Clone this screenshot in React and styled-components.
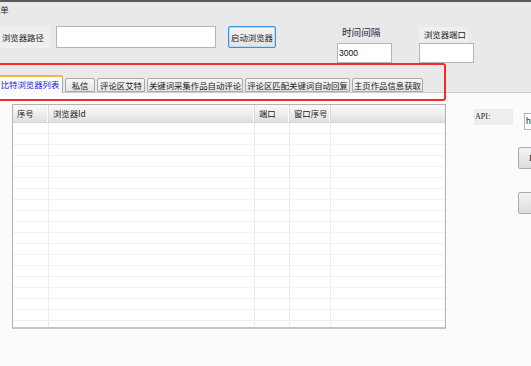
import React from "react";
import styled, { createGlobalStyle } from "styled-components";

const Global = createGlobalStyle`
  html, body { margin: 0; padding: 0; }
  body {
    width: 531px; height: 366px; overflow: hidden;
    background: #fbfbfd;
    font-family: "Noto Sans CJK SC", "Noto Sans", sans-serif;
  }
  #root { width: 531px; height: 366px; }
`;

const Window = styled.div`
  position: relative;
  width: 531px;
  height: 366px;
  overflow: hidden;
  display: flex;
  flex-direction: column;
  background: #fbfbfd;
`;

const TopArea = styled.div`
  background: #e9e9e9;
  display: flex;
  flex-direction: column;
`;

const TopLine = styled.div`
  height: 2px;
  background: #5a5a5a;
`;

const MenuBar = styled.div`
  height: 14px;
  font-size: 8.4px;
  line-height: 14px;
  color: #20263a;
  white-space: nowrap;
  span { margin-left: -8px; }
`;

const FormRow = styled.div`
  display: flex;
  align-items: flex-start;
  margin-top: 10px;
  height: 37px;
`;

const Label = styled.div`
  font-size: 8.4px;
  color: #222;
  white-space: nowrap;
  background: ${(p) => (p.$boxed ? "#efefef" : "transparent")};
  height: ${(p) => p.$h || 22}px;
  line-height: ${(p) => p.$h || 22}px;
  width: ${(p) => (p.$w ? p.$w + "px" : "auto")};
  padding-left: ${(p) => p.$pl || 0}px;
  margin-left: ${(p) => p.$ml || 0}px;
  margin-top: ${(p) => p.$mt || 0}px;
  box-sizing: border-box;
`;

const TimeLabel = styled.div`
  font-size: 9.6px;
  line-height: 11px;
  height: 11px;
  margin-top: 1px;
  padding-left: 5px;
  color: #1b2744;
  white-space: nowrap;
`;

const TextInput = styled.div`
  box-sizing: border-box;
  width: ${(p) => p.$w}px;
  height: ${(p) => p.$h}px;
  margin-left: ${(p) => p.$ml || 0}px;
  margin-top: ${(p) => p.$mt || 0}px;
  background: #fff;
  border: 1px solid #b4b4b4;
  font-family: "Liberation Sans", Arial, sans-serif;
  font-size: 8.6px;
  line-height: ${(p) => p.$h - 2}px;
  padding-left: 1px;
  color: #111;
  white-space: nowrap;
  overflow: hidden;
  flex-shrink: 0;
`;

const LaunchButton = styled.div`
  box-sizing: border-box;
  width: 48px;
  height: 22px;
  margin-left: 12px;
  border: 1px solid #3f8fe0;
  border-radius: 2px;
  box-shadow: inset 0 0 0 1px #b5dcf7;
  background: linear-gradient(#f4f4f4, #e3e3e3);
  font-size: 8.4px;
  line-height: 20px;
  text-align: center;
  color: #222;
  white-space: nowrap;
`;

const Group = styled.div`
  display: flex;
  flex-direction: column;
  margin-left: ${(p) => p.$ml}px;
`;

const TabStrip = styled.div`
  display: flex;
  align-items: flex-end;
  gap: 2px;
  height: 29px;
  border-bottom: 1px solid #cdcdcd;
  box-sizing: content-box;
`;

const Tab = styled.div`
  position: relative;
  box-sizing: border-box;
  flex-shrink: 0;
  width: ${(p) => p.$w}px;
  margin-left: ${(p) => p.$ml || 0}px;
  height: ${(p) => (p.$active ? 18 : 14)}px;
  margin-bottom: ${(p) => (p.$active ? -1 : 0)}px;
  border: 1px solid #a9a9a9;
  border-bottom: ${(p) => (p.$active ? "none" : "1px solid #a9a9a9")};
  border-top: ${(p) => (p.$active ? "2px solid #f3b23a" : "1px solid #a9a9a9")};
  border-radius: 2px 2px 0 0;
  background: ${(p) => (p.$active ? "#fbfbfd" : "linear-gradient(#f6f6f6, #e5e5e5)")};
  z-index: ${(p) => (p.$active ? 1 : 0)};
  font-size: 8.4px;
  line-height: ${(p) => (p.$active ? 15 : 12)}px;
  text-align: center;
  color: ${(p) => (p.$active ? "#1a22d8" : "#222")};
  white-space: nowrap;
`;

const TabPage = styled.div`
  flex: 1;
  display: flex;
  align-items: flex-start;
  background: #fbfbfd;
`;

const GridBox = styled.div`
  box-sizing: border-box;
  margin-top: 11px;
  margin-left: 12px;
  width: 434px;
  height: 225px;
  border: 1px solid #b2b2b2;
  border-bottom: 2px solid #c4c4c4;
  background: #fff;
  overflow: hidden;
  flex-shrink: 0;
`;

const cols = "36px 206px 35px 41px 1fr";

const HeaderRow = styled.div`
  display: grid;
  grid-template-columns: ${cols};
  height: 17px;
  background: linear-gradient(#f9f9f9, #ededed 55%, #dedede);
  border-bottom: 1px solid #d6d6d6;
`;

const HeaderCell = styled.div`
  font-size: 8.4px;
  line-height: 17px;
  padding-left: 4px;
  color: #222;
  white-space: nowrap;
  border-right: ${(p) => (p.$last ? "none" : "1px solid #dcdcdc")};
  box-shadow: ${(p) => (p.$last ? "none" : "inset -1px 0 0 #fdfdfd")};
`;

const BodyRow = styled.div`
  display: grid;
  grid-template-columns: ${cols};
  height: 11px;
  box-sizing: border-box;
  border-bottom: 1px solid #f1f1f1;
`;

const BodyCell = styled.div`
  border-right: ${(p) => (p.$last ? "none" : "1px solid #ececec")};
`;

const RightPanel = styled.div`
  display: flex;
  flex-direction: column;
  margin-left: 28px;
  margin-top: 16px;
  flex-shrink: 0;
`;

const ApiRow = styled.div`
  display: flex;
  align-items: flex-start;
`;

const ApiLabel = styled.div`
  width: 39px;
  height: 16px;
  background: #eeeeee;
  font-family: "Liberation Serif", "DejaVu Serif", serif;
  font-size: 8px;
  line-height: 16px;
  padding-left: 1px;
  box-sizing: border-box;
  color: #222;
`;

const SideButton = styled.div`
  box-sizing: border-box;
  width: 60px;
  height: 22px;
  margin-left: 44px;
  margin-top: ${(p) => p.$mt}px;
  border: 1px solid #acacac;
  border-radius: 2px;
  background: linear-gradient(#f3f3f3, #dddddd);
  font-family: "Liberation Serif", serif;
  font-size: 9px;
  line-height: 20px;
  padding-left: 10px;
  color: #111;
  white-space: nowrap;
`;

const Highlight = styled.div`
  position: absolute;
  left: -10px;
  top: 63px;
  width: 456px;
  height: 38px;
  box-sizing: border-box;
  border: 2px solid #f52a2a;
  border-radius: 3px;
  pointer-events: none;
  z-index: 5;
`;

const tabs = [
  { label: "比特浏览器列表", w: 66, active: true },
  { label: "私信", w: 30 },
  { label: "评论区艾特", w: 48 },
  { label: "关键词采集作品自动评论", w: 96 },
  { label: "评论区匹配关键词自动回复", w: 105 },
  { label: "主页作品信息获取", w: 71 },
];

const headers = ["序号", "浏览器Id", "端口", "窗口序号", ""];
const rows = Array.from({ length: 19 });

export default function App() {
  return (
    <>
      <Global />
      <Window>
        <TopArea>
          <TopLine />
          <MenuBar>
            <span>菜单</span>
          </MenuBar>
          <FormRow>
            <Label $boxed $w={50} $pl={2}>浏览器路径</Label>
            <TextInput $w={160} $h={22} $ml={6} />
            <LaunchButton>启动浏览器</LaunchButton>
            <Group $ml={61}>
              <TimeLabel>时间间隔</TimeLabel>
              <TextInput $w={55} $h={20} $mt={5}>3000</TextInput>
            </Group>
            <Group $ml={27}>
              <Label $boxed $h={15} $w={49} $pl={5} $mt={1}>浏览器端口</Label>
              <TextInput $w={55} $h={20} $mt={1} />
            </Group>
          </FormRow>
          <TabStrip>
            {tabs.map((t, i) => (
              <Tab key={t.label} $w={t.w} $active={t.active} $ml={i === 0 ? -3 : 0}>
                {t.label}
              </Tab>
            ))}
          </TabStrip>
        </TopArea>
        <TabPage>
          <GridBox>
            <HeaderRow>
              {headers.map((h, i) => (
                <HeaderCell key={i} $last={i === headers.length - 1}>{h}</HeaderCell>
              ))}
            </HeaderRow>
            {rows.map((_, r) => (
              <BodyRow key={r}>
                {headers.map((_, i) => (
                  <BodyCell key={i} $last={i === headers.length - 1} />
                ))}
              </BodyRow>
            ))}
          </GridBox>
          <RightPanel>
            <ApiRow>
              <ApiLabel>API:</ApiLabel>
              <TextInput $w={80} $h={17} $ml={11} $mt={4}>http://127.0.0.1:54345</TextInput>
            </ApiRow>
            <SideButton $mt={17}>Init</SideButton>
            <SideButton $mt={23}>&nbsp;</SideButton>
          </RightPanel>
        </TabPage>
        <Highlight />
      </Window>
    </>
  );
}
